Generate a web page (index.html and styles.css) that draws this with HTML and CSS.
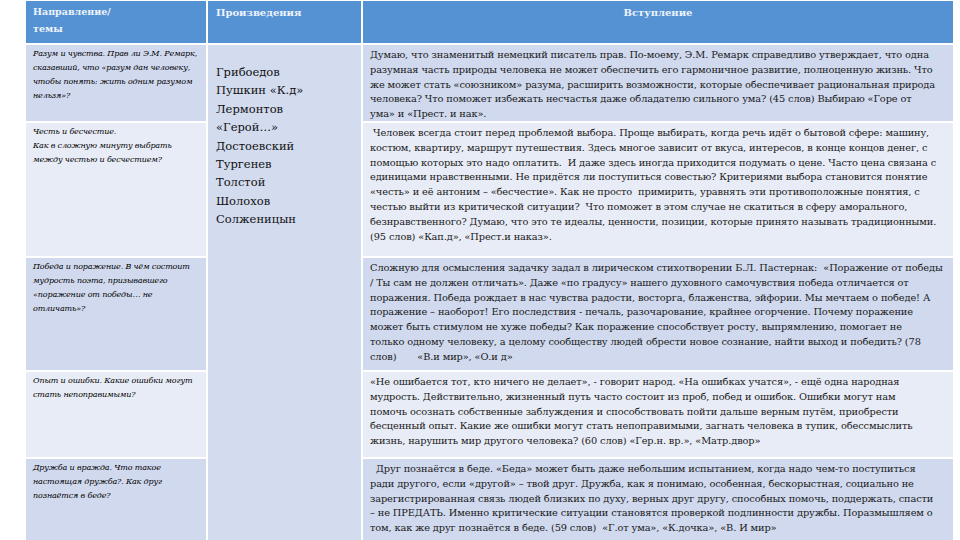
FILE: index.html
```html
<!DOCTYPE html>
<html lang="ru">
<head>
<meta charset="utf-8">
<title>Направление / темы</title>
<link rel="stylesheet" href="styles.css">
</head>
<body>
<div class="page">
  <div class="table">
    <div class="head head-theme">Направление/<br>темы</div>
    <div class="head head-works">Произведения</div>
    <div class="head head-intro">Вступление</div>

    <div class="theme dark">Разум и чувства. Прав ли Э.М. Ремарк,<br>сказавший, что «разум дан человеку,<br>чтобы понять: жить одним разумом<br>нельзя»?</div>
    <div class="works">Грибоедов<br>Пушкин «К.д»<br>Лермонтов<br>«Герой…»<br>Достоевский<br>Тургенев<br>Толстой<br>Шолохов<br>Солженицын</div>
    <div class="intro dark">Думаю, что знаменитый немецкий писатель прав. По-моему, Э.М. Ремарк справедливо утверждает, что одна<br>разумная часть природы человека не может обеспечить его гармоничное развитие, полноценную жизнь. Что<br>же может стать «союзником» разума, расширить возможности, которые обеспечивает рациональная природа<br>человека? Что поможет избежать несчастья даже обладателю сильного ума? (45 слов) Выбираю «Горе от<br>ума» и «Прест. и нак».</div>

    <div class="theme light">Честь и бесчестие.<br>Как в сложную минуту выбрать<br>между честью и бесчестием?</div>
    <div class="intro light">&nbsp;Человек всегда стоит перед проблемой выбора. Проще выбирать, когда речь идёт о бытовой сфере: машину,<br>костюм, квартиру, маршрут путешествия. Здесь многое зависит от вкуса, интересов, в конце концов денег, с<br>помощью которых это надо оплатить. &nbsp;И даже здесь иногда приходится подумать о цене. Часто цена связана с<br>единицами нравственными. Не придётся ли поступиться совестью? Критериями выбора становится понятие<br>«честь» и её антоним – «бесчестие». Как не просто &nbsp;примирить, уравнять эти противоположные понятия, с<br>честью выйти из критической ситуации? &nbsp;Что поможет в этом случае не скатиться в сферу аморального,<br>безнравственного? Думаю, что это те идеалы, ценности, позиции, которые принято называть традиционными.<br>(95 слов) «Кап.д», «Прест.и наказ».</div>

    <div class="theme dark">Победа и поражение. В чём состоит<br>мудрость поэта, призывавшего<br>«поражение от победы… не<br>отличать»?</div>
    <div class="intro dark">Сложную для осмысления задачку задал в лирическом стихотворении Б.Л. Пастернак: &nbsp;«Поражение от победы<br>/ Ты сам не должен отличать». Даже «по градусу» нашего духовного самочувствия победа отличается от<br>поражения. Победа рождает в нас чувства радости, восторга, блаженства, эйфории. Мы мечтаем о победе! А<br>поражение – наоборот! Его последствия - печаль, разочарование, крайнее огорчение. Почему поражение<br>может быть стимулом не хуже победы? Как поражение способствует росту, выпрямлению, помогает не<br>только одному человеку, а целому сообществу людей обрести новое сознание, найти выход и победить? (78<br>слов) &nbsp; &nbsp; &nbsp; «В.и мир», «О.и д»</div>

    <div class="theme light">Опыт и ошибки. Какие ошибки могут<br>стать непоправимыми?</div>
    <div class="intro light">«Не ошибается тот, кто ничего не делает», - говорит народ. «На ошибках учатся», - ещё одна народная<br>мудрость. Действительно, жизненный путь часто состоит из проб, побед и ошибок. Ошибки могут нам<br>помочь осознать собственные заблуждения и способствовать пойти дальше верным путём, приобрести<br>бесценный опыт. Какие же ошибки могут стать непоправимыми, загнать человека в тупик, обессмыслить<br>жизнь, нарушить мир другого человека? (60 слов) «Гер.н. вр.», «Матр.двор»</div>

    <div class="theme dark">Дружба и вражда. Что такое<br>настоящая дружба?. Как друг<br>познаётся в беде?</div>
    <div class="intro dark">&nbsp; Друг познаётся в беде. «Беда» может быть даже небольшим испытанием, когда надо чем-то поступиться<br>ради другого, если «другой» – твой друг. Дружба, как я понимаю, особенная, бескорыстная, социально не<br>зарегистрированная связь людей близких по духу, верных друг другу, способных помочь, поддержать, спасти<br>– не ПРЕДАТЬ. Именно критические ситуации становятся проверкой подлинности дружбы. Поразмышляем о<br>том, как же друг познаётся в беде. (59 слов) &nbsp;«Г.от ума», «К.дочка», «В. И мир»</div>
  </div>
</div>
</body>
</html>
```

FILE: styles.css
```css
html, body {
  margin: 0;
  padding: 0;
  background: #ffffff;
  width: 960px;
  height: 540px;
  overflow: hidden;
}

.page {
  padding: 1px 0 0 26px;
}

.table {
  display: grid;
  grid-template-columns: 180px 153px 590px;
  grid-template-rows: 42px 76px 133px 112px 85px 90px;
  column-gap: 2px;
  row-gap: 2px;
  background: #ffffff;
  color: #1a1a1a;
  font-family: "DejaVu Serif", serif;
}

.table > div {
  overflow: hidden;
  white-space: nowrap;
}

.head {
  background: #5592d3;
  color: #eef4fc;
  font-weight: bold;
}

.head-theme {
  font-size: 9.5px;
  line-height: 17px;
  padding: 2px 7px 0;
}

.head-works {
  font-size: 10px;
  padding: 6px 8px 0;
}

.head-intro {
  font-size: 10px;
  padding: 6px 0 0;
  text-align: center;
}

.dark {
  background: #d0d9ee;
}

.light {
  background: #e8ecf6;
}

.theme {
  font-style: italic;
  font-size: 8px;
  line-height: 14px;
  padding: 2px 7px 0;
  letter-spacing: -0.15px;
  color: #000000;
}

.works {
  grid-column: 2;
  grid-row: 2 / 7;
  background: #d3dbef;
  font-size: 11.5px;
  line-height: 18.4px;
  padding: 18px 8px 0;
  color: #111111;
}

.intro {
  font-size: 9.8px;
  line-height: 14.8px;
  padding: 3px 4px 0 7px;
  letter-spacing: -0.12px;
}
```
